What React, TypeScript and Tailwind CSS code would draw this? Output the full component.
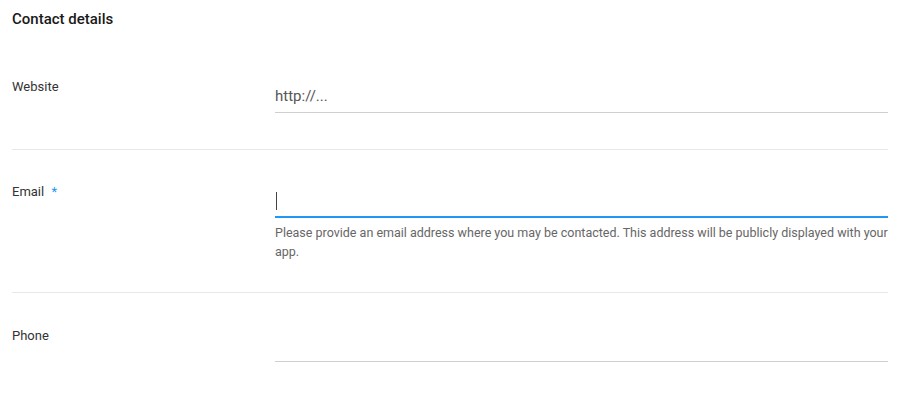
export default function App() {
  return (
    <div className="min-h-screen bg-white px-3 font-['Roboto',sans-serif] text-[#212121]">
      <div className="pt-[9px] pb-4 text-[15px] font-medium leading-5 text-[#1a1a1a]">Contact details</div>

      {/* Website */}
      <div className="flex pt-8 pb-9 border-b border-[#e8e8e8]">
        <div className="w-[263px] shrink-0 text-[13px] leading-5 text-[#333]">Website</div>
        <div className="flex-1 mt-1">
          <div className="h-8 flex items-center border-b border-[#cfcfcf] text-[15px] text-[#555]">http://...</div>
        </div>
      </div>

      {/* Email */}
      <div className="flex pt-8 pb-[31px] border-b border-[#e8e8e8]">
        <div className="w-[263px] shrink-0 text-[13px] leading-5 text-[#333]">
          Email <span className="ml-1 text-[#2196f3]">*</span>
        </div>
        <div className="flex-1 mt-1">
          <div className="h-8 flex items-center border-b-2 border-[#2196f3]">
            <span className="ml-[1px] h-[18px] w-px bg-[#444]" />
          </div>
          <p className="mt-[5px] text-[12.5px] leading-[19px] text-[#666]">
            Please provide an email address where you may be contacted. This address will be publicly displayed with your app.
          </p>
        </div>
      </div>

      {/* Phone */}
      <div className="flex pt-[33px] pb-9">
        <div className="w-[263px] shrink-0 text-[13px] leading-5 text-[#333]">Phone</div>
        <div className="flex-1 mt-1">
          <div className="h-8 border-b border-[#cfcfcf]" />
        </div>
      </div>
    </div>
  );
}
